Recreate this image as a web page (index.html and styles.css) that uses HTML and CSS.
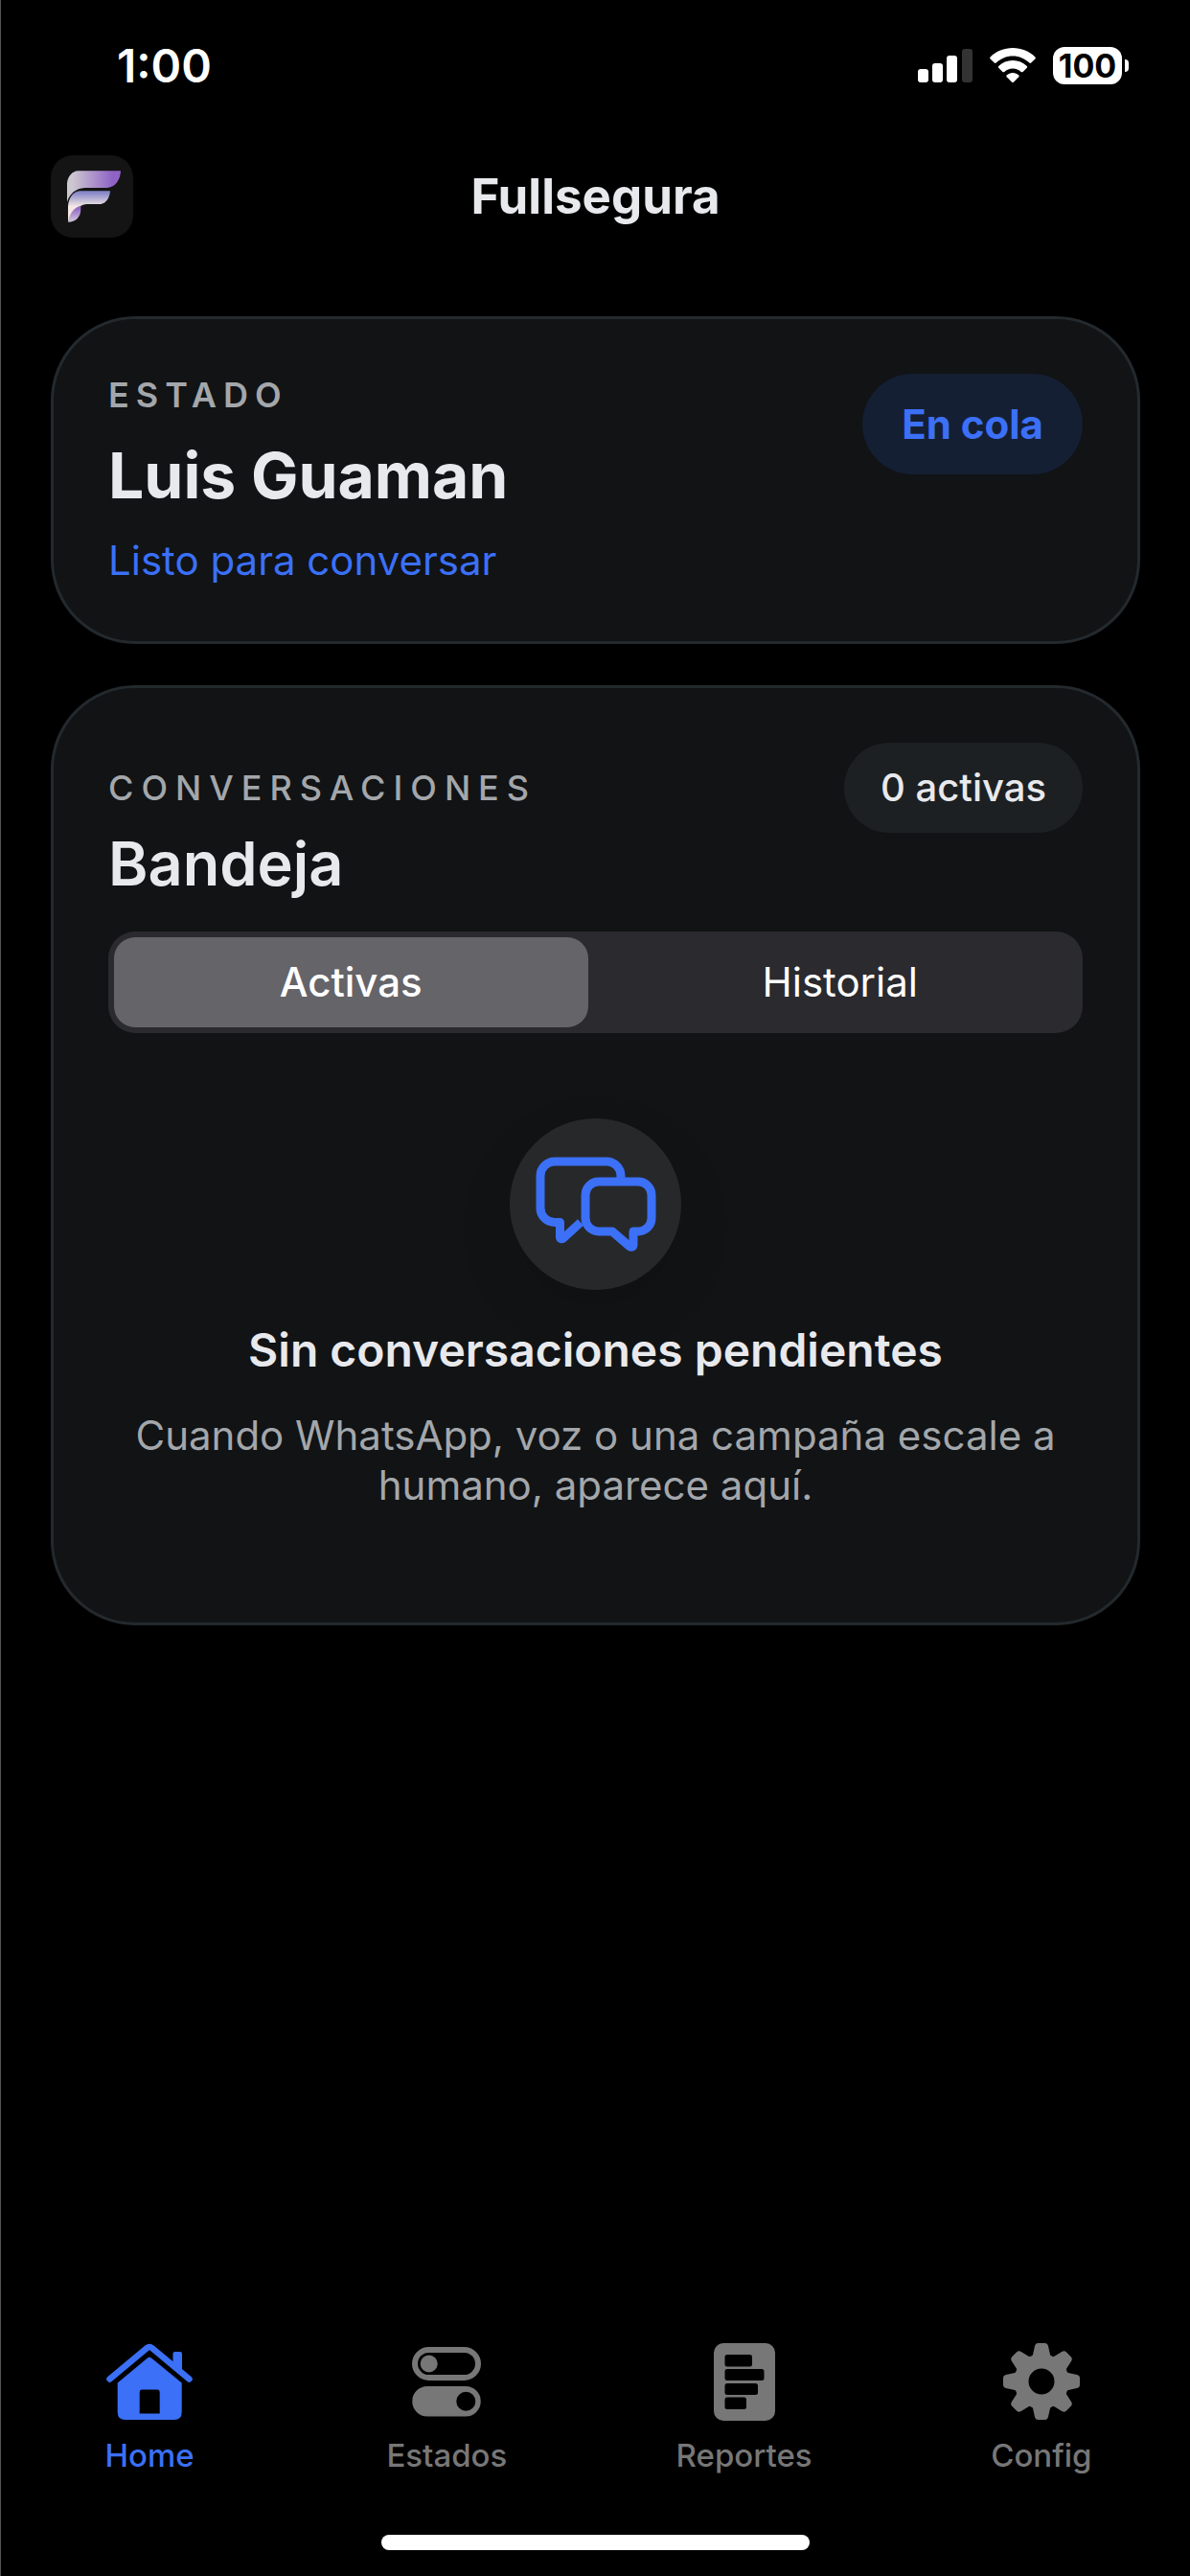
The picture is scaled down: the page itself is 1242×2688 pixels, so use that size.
FILE: index.html
```html
<!DOCTYPE html>
<html lang="es">
<head>
  <meta charset="UTF-8">
  <meta name="viewport" content="width=device-width, initial-scale=1.0">
  <title>Fullsegura</title>
  <link rel="stylesheet" href="styles.css">
</head>
<body>
  <div class="status-bar">
    <span class="time">1:00</span>
    <div class="status-icons">
      <svg class="signal" viewBox="0 0 57 35" aria-hidden="true">
        <rect x="0" y="21" width="11" height="14" rx="3" fill="#fff"/>
        <rect x="15" y="15" width="11" height="20" rx="3" fill="#fff"/>
        <rect x="30" y="7" width="11" height="28" rx="3" fill="#fff"/>
        <rect x="46" y="0" width="11" height="35" rx="3" fill="#333"/>
      </svg>
      <svg class="wifi" viewBox="0 0 48 37" aria-hidden="true">
        <path fill="#fff" d="M24 0C33 0 41.400 3.500 47.400 9.400Q48.300 10.400 47.400 11.400L43.200 15.600Q42.300 16.400 41.300 15.600C36.800 11.200 30.700 8.500 24 8.500S11.200 11.200 6.700 15.600Q5.700 16.400 4.800 15.600L0.600 11.400Q-0.300 10.400 0.600 9.400C6.600 3.500 15 0 24 0Z"/>
        <path fill="#fff" d="M24 13C29.700 13 34.900 15.200 38.800 18.900Q39.600 19.800 38.800 20.700L34.600 24.900Q33.700 25.700 32.700 24.900C30.400 22.700 27.400 21.400 24 21.400S17.600 22.700 15.300 24.900Q14.300 25.700 13.400 24.900L9.200 20.700Q8.400 19.800 9.200 18.900C13.100 15.200 18.300 13 24 13Z"/>
        <path fill="#fff" d="M24 26C26.500 26 28.600 26.900 30.300 28.400Q31.100 29.300 30.300 30.200L24.900 35.700Q24 36.500 23.100 35.700L17.700 30.200Q16.900 29.300 17.700 28.400C19.400 26.900 21.500 26 24 26Z"/>
      </svg>
      <div class="battery">100</div>
    </div>
  </div>

  <header class="header">
    <svg class="logo" viewBox="39 36 258 258" role="img" aria-label="Logo de Fullsegura">
      <defs>
        <linearGradient id="logoTop" x1="0" x2="1" y1="0" y2="0">
          <stop offset="0.1" stop-color="#cdc7d0"/>
          <stop offset="0.85" stop-color="#8f63c6"/>
        </linearGradient>
        <linearGradient id="logoMiddle" x1="0" x2="0" y1="0" y2="1">
          <stop offset="0.05" stop-color="#8787ca"/>
          <stop offset="0.5" stop-color="#f3e8e2"/>
        </linearGradient>
        <linearGradient id="logoBottom" x1="0" x2="0" y1="0" y2="1">
          <stop offset="0.15" stop-color="#9268c8"/>
          <stop offset="1" stop-color="#d3cad8"/>
        </linearGradient>
      </defs>
      <rect x="39" y="36" width="258" height="258" rx="70" fill="#141414"/>
      <path fill="url(#logoTop)" d="M90 182V124C92 102 106 86 124 85H258C257 112 242 136 216 138H146C116 140 99 156 90 182Z"/>
      <path fill="url(#logoMiddle)" d="M93 245V196C95 170 108 150 130 148H225C223 170 213 186 196 189H150C122 194 103 215 93 245Z"/>
      <path fill="url(#logoBottom)" d="M93 245C98 217 113 198 133 194V207C132 230 117 245 93 245Z"/>
    </svg>
    <h1>Fullsegura</h1>
  </header>

  <main class="content">
    <section class="card status-card">
      <div class="agent">
        <p class="label label-bold">ESTADO</p>
        <h2 class="agent-name">Luis Guaman</h2>
        <p class="agent-status">Listo para conversar</p>
      </div>
      <button class="pill pill-blue">En cola</button>
    </section>

    <section class="card inbox-card">
      <div class="inbox-top">
        <p class="label">CONVERSACIONES</p>
        <span class="pill pill-gray">0 activas</span>
      </div>
      <h2 class="inbox-title">Bandeja</h2>

      <div class="segments" role="tablist">
        <button class="segment active" role="tab" aria-selected="true">Activas</button>
        <button class="segment" role="tab" aria-selected="false">Historial</button>
      </div>

      <div class="empty">
        <div class="empty-icon">
          <svg viewBox="0 0 126 99" aria-hidden="true">
            <path d="M89 23V20A15 15 0 0 0 74 5H20A15 15 0 0 0 5 20V53.500A15 15 0 0 0 20 68.500H25.500V84Q26 87 29 85L47 68.500"/>
            <path d="M66 26H107A14 14 0 0 1 121 40V64A14 14 0 0 1 107 78H102V92Q101.500 95.500 98 93.500L80 78H66A14 14 0 0 1 52 64V40A14 14 0 0 1 66 26Z"/>
          </svg>
        </div>
        <h3>Sin conversaciones pendientes</h3>
        <p>Cuando WhatsApp, voz o una campaña escale a humano, aparece aquí.</p>
      </div>
    </section>
  </main>

  <nav class="tabs">
    <a href="#home" class="tab active">
      <svg width="90" height="82" viewBox="0 0 90 82" aria-hidden="true">
        <path d="M3.500 37.500L42.500 5Q45 3 47.500 5L86.500 37.500" fill="none" stroke="currentColor" stroke-width="6.500" stroke-linecap="round"/>
        <path fill="currentColor" d="M69.500 22V11Q69.500 9 71.500 9H77Q79 9 79 11V31Z"/>
        <path fill="currentColor" fill-rule="evenodd" d="M11.700 41.500L43 15.500Q45 14 47 15.500L78.700 41.500V72Q78.700 80 70.700 80H19.700Q11.700 80 11.700 72ZM37 48.500Q34.700 48.500 34.700 51V73.500H55.700V51Q55.700 48.500 53.500 48.500Z"/>
      </svg>
      Home
    </a>
    <a href="#estados" class="tab">
      <svg width="72" height="82" viewBox="0 -4 72 82" aria-hidden="true">
        <rect x="3" y="3" width="66" height="29" rx="14.500" fill="none" stroke="currentColor" stroke-width="6"/>
        <circle cx="17.700" cy="17.500" r="9" fill="currentColor"/>
        <path fill="currentColor" fill-rule="evenodd" d="M16 41H56A15.700 15.700 0 0 1 56 72.500H16A15.700 15.700 0 0 1 16 41ZM56.300 46.700A10 10 0 1 0 56.300 66.700A10 10 0 1 0 56.300 46.700Z"/>
      </svg>
      Estados
    </a>
    <a href="#reportes" class="tab">
      <svg width="64" height="82" viewBox="0 0 64 82" aria-hidden="true">
        <rect width="64" height="81" rx="10" fill="currentColor"/>
        <rect x="11.500" y="12" width="28.500" height="12.500" rx="2.500" fill="#000"/>
        <rect x="11.500" y="27" width="41" height="12" rx="2.500" fill="#000"/>
        <rect x="11.500" y="42" width="34.500" height="12" rx="2.500" fill="#000"/>
        <rect x="11.500" y="56.500" width="22.500" height="12.500" rx="2.500" fill="#000"/>
      </svg>
      Reportes
    </a>
    <a href="#config" class="tab">
      <svg width="80" height="82" viewBox="-40 -40 80 82" aria-hidden="true">
        <defs>
          <path id="tooth" d="M-12 -24Q-9.500 -26 -9 -28L-7 -37Q-6.200 -40 -3.500 -40H3.500Q6.200 -40 7 -37L9 -28Q9.500 -26 12 -24Z"/>
        </defs>
        <circle r="21" fill="none" stroke="currentColor" stroke-width="15"/>
        <g fill="currentColor">
          <use href="#tooth"/>
          <use href="#tooth" transform="rotate(45)"/>
          <use href="#tooth" transform="rotate(90)"/>
          <use href="#tooth" transform="rotate(135)"/>
          <use href="#tooth" transform="rotate(180)"/>
          <use href="#tooth" transform="rotate(225)"/>
          <use href="#tooth" transform="rotate(270)"/>
          <use href="#tooth" transform="rotate(315)"/>
        </g>
      </svg>
      Config
    </a>
  </nav>
  <div class="home-indicator"></div>
</body>
</html>
```
FILE: styles.css
```css
* {
  box-sizing: border-box;
}

body {
  margin: 0;
  min-height: 100vh;
  display: flex;
  flex-direction: column;
  background: #000;
  border-left: 1px solid #555;
  color: #e8e9ed;
  font-family: Inter, 'Liberation Sans', sans-serif;
}

h1, h2, h3, p {
  margin: 0;
}

button {
  border: none;
  font-family: inherit;
  cursor: pointer;
}

/* Status bar */
.status-bar {
  display: flex;
  align-items: center;
  justify-content: space-between;
  height: 136px;
  padding: 0 64px 0 121px;
}

.time {
  color: #fff;
  font-size: 48px;
  font-weight: 600;
}

.status-icons {
  display: flex;
  align-items: center;
  gap: 18px;
}

.signal {
  width: 57px;
  height: 35px;
}

.wifi {
  width: 48px;
  height: 37px;
}

.battery {
  position: relative;
  width: 72px;
  height: 39px;
  margin-right: 7px;
  border-radius: 12px;
  background: #fff;
  color: #000;
  font-size: 34px;
  font-weight: 700;
  line-height: 39px;
  text-align: center;
}

.battery::after {
  content: '';
  position: absolute;
  top: 13px;
  right: -7px;
  width: 4px;
  height: 13px;
  border-radius: 0 6px 6px 0;
  background: #fff;
}

/* Header */
.header {
  display: grid;
  grid-template-columns: 86px 1fr 86px;
  align-items: center;
  padding: 26px 52px 82px;
}

.logo {
  width: 86px;
  height: 86px;
}

.header h1 {
  font-size: 51px;
  font-weight: 700;
  line-height: 60px;
  text-align: center;
}

/* Cards */
.content {
  flex: 1;
  display: flex;
  flex-direction: column;
  gap: 43px;
  padding: 0 52px;
}

.card {
  padding: 57px;
  border: 3px solid #23292d;
  border-radius: 88px;
  background: #111315;
}

.status-card {
  display: flex;
  align-items: flex-start;
  justify-content: space-between;
}

.agent {
  display: flex;
  flex-direction: column;
  gap: 18px;
}

.label {
  color: #a3a7ab;
  font-size: 36px;
  font-weight: 500;
  line-height: 44px;
  letter-spacing: 8px;
}

.label-bold {
  font-weight: 600;
  letter-spacing: 7px;
}

.agent-name {
  font-size: 66px;
  font-weight: 700;
  line-height: 88px;
}

.agent-status {
  color: #3b70f7;
  font-size: 42px;
  line-height: 54px;
}

.pill {
  padding: 0 38px;
  border-radius: 53px;
  line-height: 94px;
}

.pill-blue {
  padding: 0 41px;
  background: #151f33;
  color: #3b70f7;
  font-size: 42px;
  font-weight: 700;
  line-height: 105px;
}

.pill-gray {
  background: #1d2022;
  font-size: 40px;
  font-weight: 500;
}

.inbox-top {
  display: flex;
  align-items: center;
  justify-content: space-between;
}

.inbox-title {
  font-size: 63px;
  font-weight: 600;
  line-height: 64px;
}

.segments {
  display: grid;
  grid-template-columns: 1fr 1fr;
  gap: 16px;
  margin-top: 39px;
  padding: 6px;
  border-radius: 28px;
  background: #2a2a2f;
}

.segment {
  padding: 0;
  border-radius: 22px;
  background: transparent;
  color: #fff;
  font-size: 42px;
  font-weight: 400;
  line-height: 94px;
}

.segment.active {
  background: #646469;
  font-weight: 500;
}

/* Empty state */
.empty {
  display: flex;
  flex-direction: column;
  align-items: center;
  gap: 33px;
  padding: 89px 0 60px;
  text-align: center;
}

.empty-icon {
  display: flex;
  align-items: center;
  justify-content: center;
  width: 179px;
  height: 179px;
  border-radius: 50%;
  background: #272829;
  box-shadow: 0 24px 60px rgba(0, 10, 10, 0.1);
}

.empty-icon svg {
  width: 126px;
  height: 99px;
  fill: none;
  stroke: #3b70f7;
  stroke-width: 9;
  stroke-linejoin: round;
}

.empty h3 {
  font-size: 48px;
  font-weight: 600;
  line-height: 60px;
}

.empty p {
  color: #a3a7ab;
  font-size: 42px;
  line-height: 52px;
}

/* Bottom tabs */
.tabs {
  display: grid;
  grid-template-columns: repeat(4, 1fr);
}

.tab {
  display: flex;
  flex-direction: column;
  align-items: center;
  gap: 15px;
  color: #777;
  font-size: 33px;
  font-weight: 500;
  line-height: 40px;
  text-decoration: none;
}

.tab.active {
  color: #3b70f7;
}

.home-indicator {
  width: 36%;
  height: 16px;
  margin: 63px auto 27px;
  border-radius: 8px;
  background: #fff;
}
```
